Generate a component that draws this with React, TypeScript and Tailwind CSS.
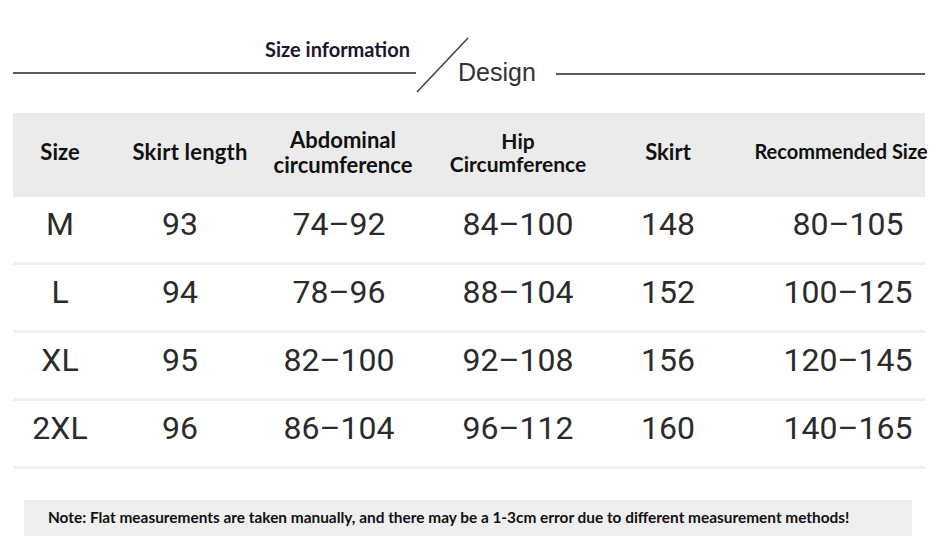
import React from "react";

const rows = [
  ["M", "93", "74–92", "84–100", "148", "80–105"],
  ["L", "94", "78–96", "88–104", "152", "100–125"],
  ["XL", "95", "82–100", "92–108", "156", "120–145"],
  ["2XL", "96", "86–104", "96–112", "160", "140–165"],
];

const cols = "grid grid-cols-[94px_156px_160px_190px_110px_202px]";

const App = () => {
  return (
    <div className="w-[949px] h-[560px] bg-white overflow-hidden">
      {/* Title */}
      <div className="flex items-start pt-[37px] pl-[13px] pr-[24px]">
        <div className="w-[403px] flex flex-col shrink-0">
          <div className="ml-[252px] text-[20px] leading-[24px] font-bold text-[#1c1530] font-['Lato',sans-serif] whitespace-nowrap">
            Size information
          </div>
          <div className="mt-[11px] h-[2px] bg-[#5a5a5a]" />
        </div>
        <svg width="54" height="56" viewBox="0 0 54 56" className="shrink-0">
          <line x1="52" y1="1" x2="1" y2="55" stroke="#444" strokeWidth="1.6" />
        </svg>
        <div className="ml-[-12px] mt-[21px] text-[25px] leading-[28px] text-[#333] font-['Liberation_Sans',Arial,sans-serif]">
          Design
        </div>
        <div className="ml-[20px] mt-[36px] flex-1 h-[2px] bg-[#5a5a5a]" />
      </div>

      {/* Table */}
      <div className="mt-[20px] mx-[13px] w-[912px]">
        <div className={`${cols} h-[84px] items-center pb-[7px] bg-[#ebebeb] text-[#111] font-['Lato',sans-serif] font-bold text-[22px] leading-[25px]`}>
          <div className="flex justify-center">Size</div>
          <div className="flex justify-center pl-[10px] whitespace-nowrap tracking-[0.2px]">Skirt length</div>
          <div className="flex flex-col items-center">
            <span>Abdominal</span>
            <span>circumference</span>
          </div>
          <div className="flex flex-col items-center text-[21px] leading-[23px]">
            <span>Hip</span>
            <span>Circumference</span>
          </div>
          <div className="flex justify-center">Skirt</div>
          <div className="flex justify-center pl-[34px] whitespace-nowrap text-[20px]">Recommended Size</div>
        </div>
        {rows.map((r) => (
          <div
            key={r[0]}
            className={`${cols} h-[68px] border-b-[3px] border-[#efefef] pt-[7px] text-[32px] leading-[40px] text-[#2b2b2b] font-['Roboto',sans-serif]`}
          >
            <div className="flex justify-center">{r[0]}</div>
            <div className="flex justify-center pr-[10px]">{r[1]}</div>
            <div className="flex justify-center pr-[8px]">{r[2]}</div>
            <div className="flex justify-center">{r[3]}</div>
            <div className="flex justify-center">{r[4]}</div>
            <div className="flex justify-center pl-[48px]">{r[5]}</div>
          </div>
        ))}
      </div>

      {/* Note */}
      <div className="mt-[31px] ml-[24px] mr-[37px] h-[36px] bg-[#efefef] flex items-center pl-[24px] text-[15.4px] font-bold text-[#111] font-['Lato',sans-serif] whitespace-nowrap">
        Note: Flat measurements are taken manually, and there may be a 1-3cm error due to different measurement methods!
      </div>
    </div>
  );
};

export default App;
